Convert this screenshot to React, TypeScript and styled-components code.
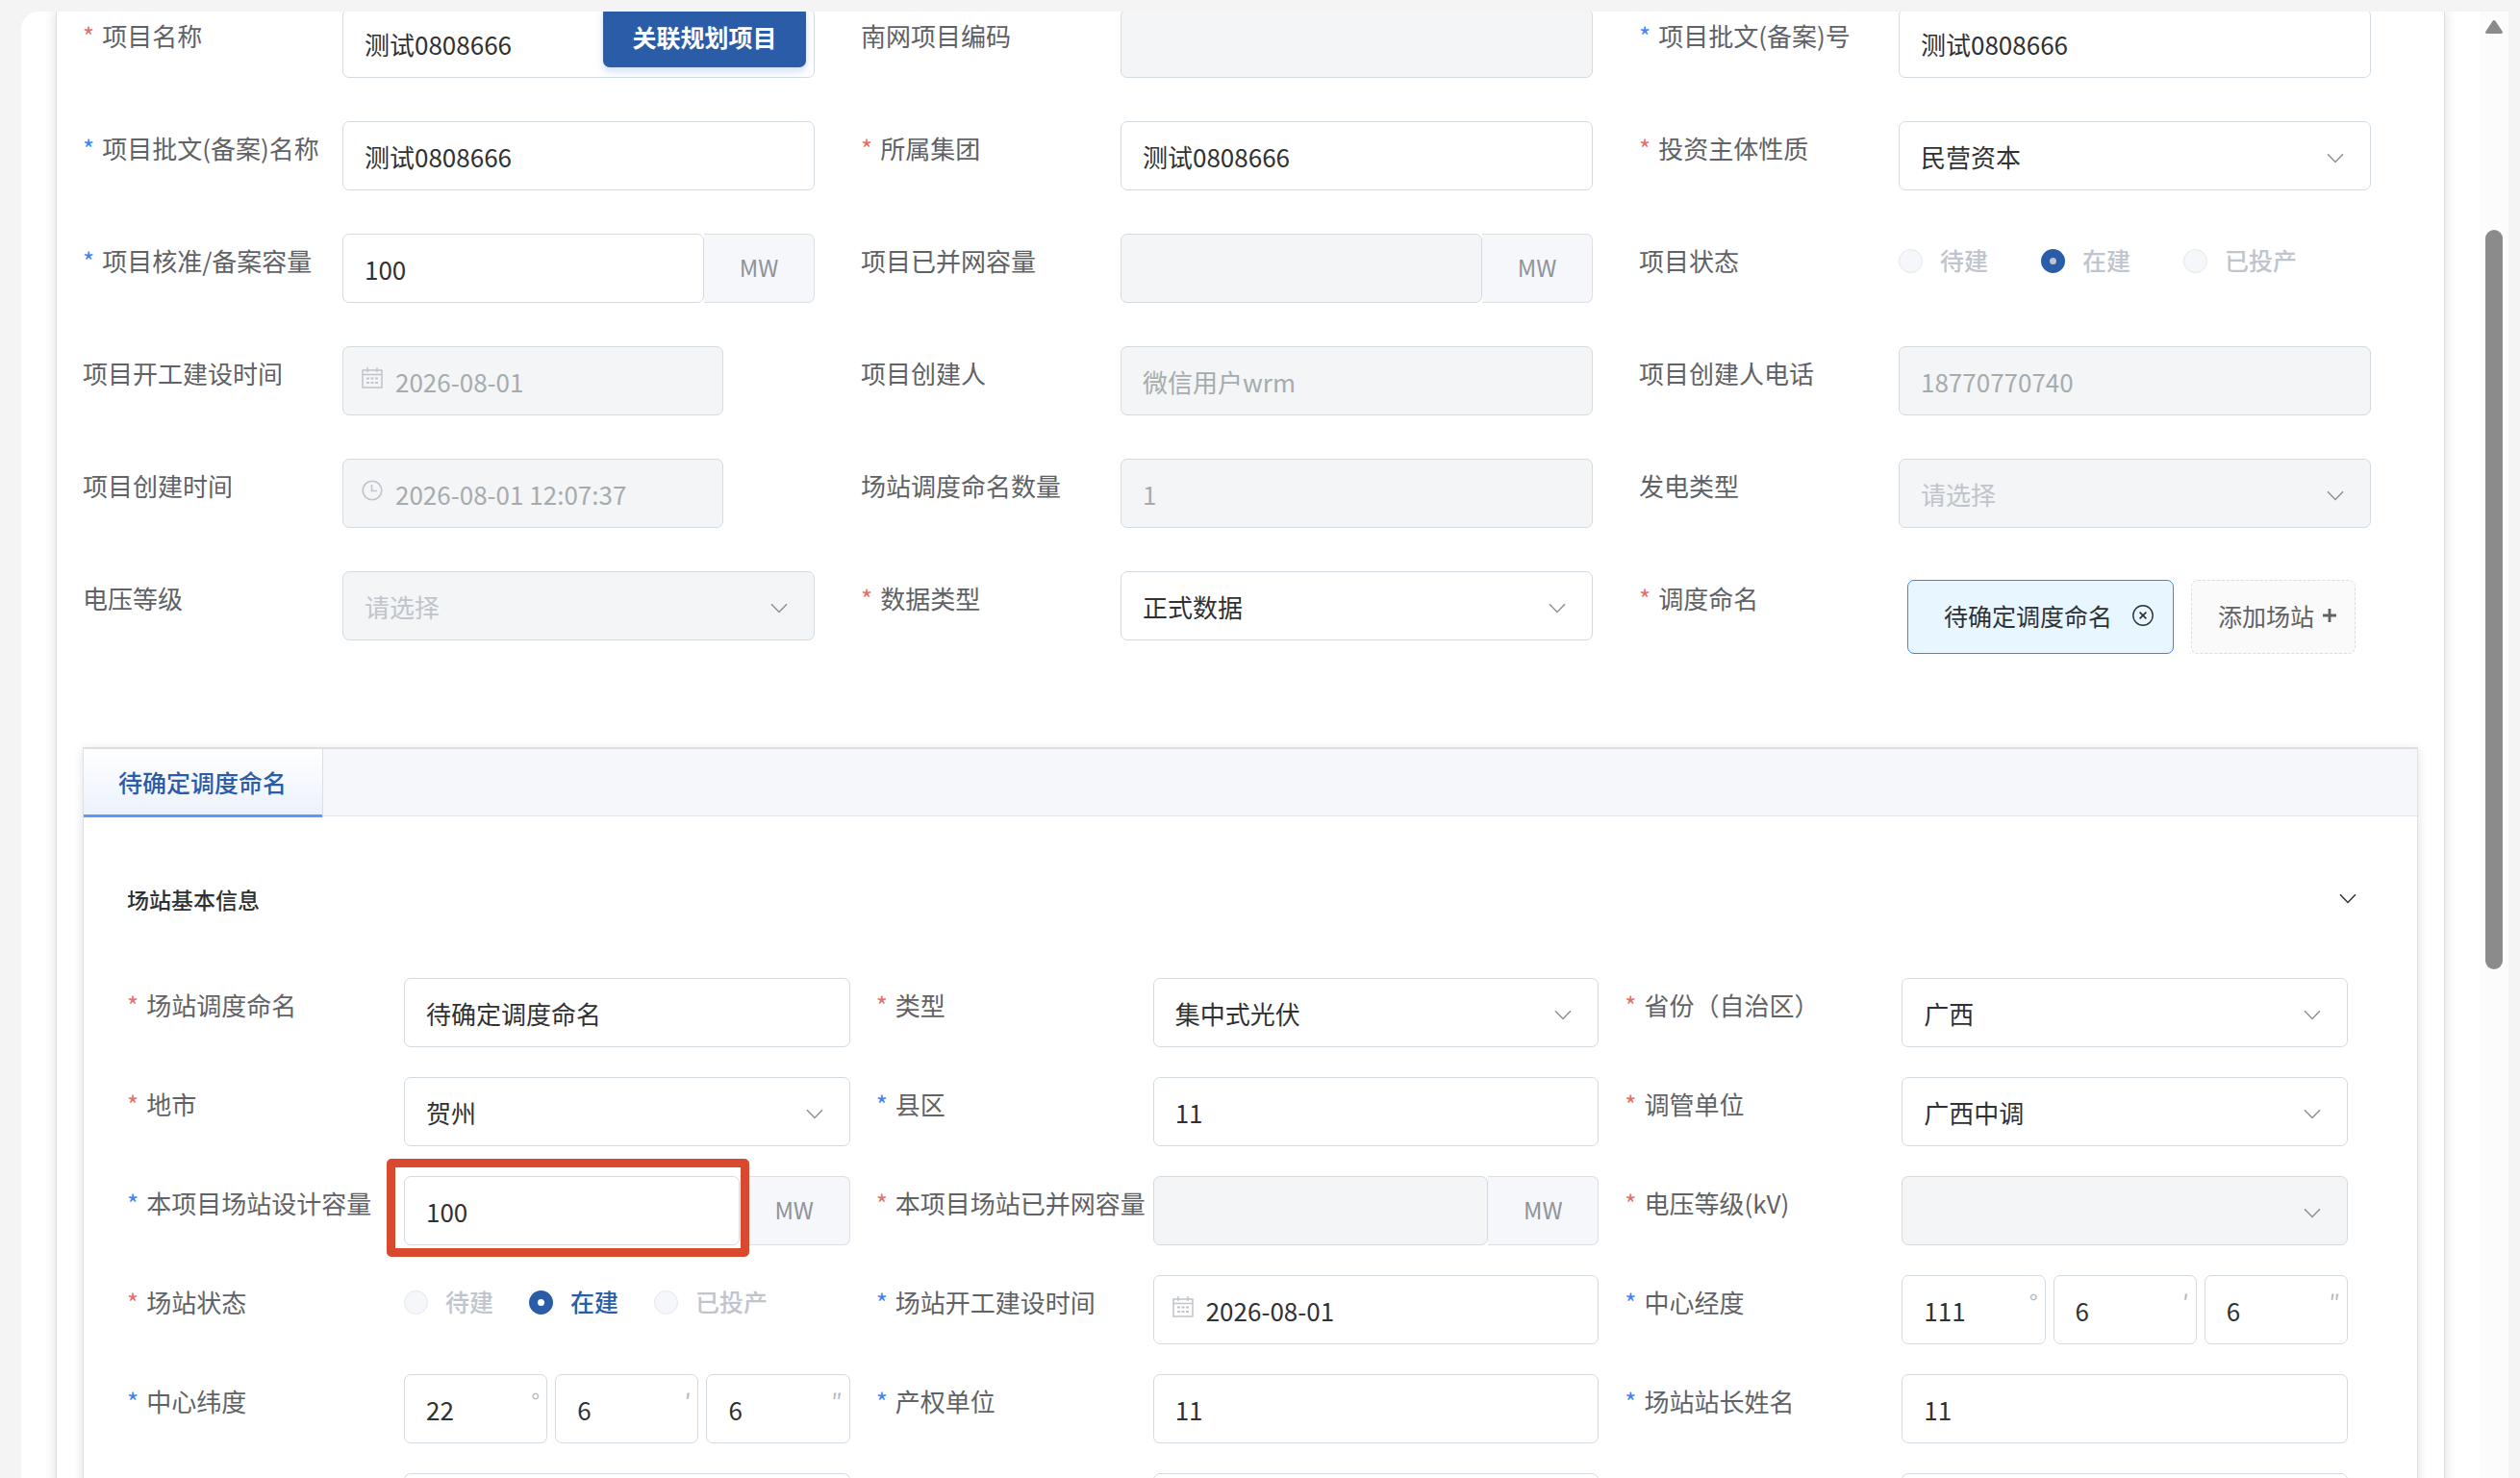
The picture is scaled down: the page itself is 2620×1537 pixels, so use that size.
import React, { useId } from 'react';
import styled, { createGlobalStyle, css } from 'styled-components';

const color = {
  page: '#f4f4f4',
  primary: '#2a5ca8',
  text: '#303133',
  label: '#606266',
  muted: '#909399',
  faint: '#c0c4cc',
  line: '#d3dbe0',
  disabledBg: '#f3f5f7',
  headerBg: '#f5f7fb',
  required: '#e57068',
  advised: '#3f82f7',
};

const GlobalStyle = createGlobalStyle`
  *, *::before, *::after { box-sizing: border-box; }
  body {
    margin: 0;
    overflow: hidden;
    background: ${color.page};
    color: ${color.text};
    font-family: "Noto Sans CJK SC", "Noto Sans", sans-serif;
    font-size: 26px;
  }
  input, select, button { font: inherit; color: inherit; margin: 0; }
`;

const Page = styled.div`
  height: 100vh;
  padding: 12px 12px 0 22px;
  display: flex;
`;

const Sheet = styled.main`
  flex: 1;
  min-width: 0;
  display: flex;
  overflow: hidden;
  background: #fff;
  border-top-left-radius: 18px;
`;

const Viewport = styled.div`
  flex: 1;
  min-width: 0;
  padding: 0 36px;
`;

const Panel = styled.div`
  margin-top: -3px;
  padding: 0 27px;
  border: 1px solid #dcdee2;
  border-top: 0;
  box-shadow: 0 2px 12px rgba(0, 0, 0, 0.14);
`;

const Scrollbar = styled.div`
  flex: 0 0 30px;
  display: flex;
  flex-direction: column;
  align-items: center;
  background: #fcfcfc;
`;

const ScrollButton = styled.button`
  height: 30px;
  padding: 2px 0 0;
  border: 0;
  background: none;
  line-height: 0;
`;

const Thumb = styled.div`
  width: 18px;
  height: 50vh;
  margin-top: 197px;
  border-radius: 9px;
  background: #8b8b8b;
`;

const FormGrid = styled.form`
  display: grid;
  grid-template-columns: repeat(3, minmax(0, 1fr));
`;

const ProjectForm = styled(FormGrid)`
  row-gap: 45px;
  padding-right: 1px;
`;

const StationForm = styled(FormGrid)`
  row-gap: 31px;
`;

const Item = styled.div<{ $dense?: boolean }>`
  display: flex;
  align-items: flex-start;
  min-height: 72px;
  padding-right: ${p => (p.$dense ? 27 : 48)}px;
`;

const Label = styled.label<{ $dense?: boolean }>`
  display: flex;
  flex: 0 0 ${p => (p.$dense ? 288 : 270)}px;
  gap: 8px;
  padding-top: 9px;
  line-height: 38px;
  color: ${color.label};
  white-space: nowrap;
`;

const Mark = styled.span<{ $kind: 'red' | 'blue' }>`
  color: ${p => (p.$kind === 'red' ? color.required : color.advised)};
`;

const Control = styled.div<{ $short?: boolean }>`
  position: relative;
  display: flex;
  flex: 1;
  min-width: 0;
  ${p => p.$short && 'margin-right: 95px;'}
`;

const boxStyle = css`
  width: 100%;
  min-width: 0;
  height: 72px;
  padding: 0 22px;
  border: 1px solid ${color.line};
  border-radius: 7px;
  background: #fff;
  color: ${color.text};
  outline: 0;
  &:disabled {
    background: ${color.disabledBg};
    color: #a6acae;
    opacity: 1;
  }
`;

const TextBox = styled.input<{ $icon?: boolean }>`
  ${boxStyle}
  ${p => p.$icon && 'padding-left: 54px;'}
`;

const SelectBox = styled.select`
  ${boxStyle}
  appearance: none;
  &:disabled { color: ${color.faint}; }
`;

const SelectArrow = styled.span`
  position: absolute;
  right: 28px;
  top: 33px;
  line-height: 0;
  color: #8c9199;
  pointer-events: none;
`;

const FieldIcon = styled.span`
  position: absolute;
  left: 20px;
  top: 22px;
  line-height: 0;
  color: ${color.faint};
`;

const Unit = styled.span`
  flex: 0 0 115px;
  height: 72px;
  padding-bottom: 4px;
  display: flex;
  align-items: center;
  justify-content: center;
  border: 1px solid #dcdfe6;
  border-left: 0;
  border-radius: 0 7px 7px 0;
  background: ${color.headerBg};
  color: ${color.muted};
  font-size: 24px;
`;

const Highlight = styled.span`
  position: absolute;
  inset: -18px 105px -12px -18px;
  border: 9px solid #d9492f;
  border-radius: 5px;
  pointer-events: none;
`;

const LinkButton = styled.button`
  position: absolute;
  top: -2px;
  right: 9px;
  width: 211px;
  height: 63px;
  padding: 0 0 2px;
  border: 0;
  border-radius: 7px;
  background: ${color.primary};
  box-shadow: 0 4px 9px rgba(64, 128, 240, 0.25);
  color: #fff;
  font-size: 25px;
  font-weight: 700;
`;

const RadioRow = styled.div<{ $dense?: boolean }>`
  display: flex;
  gap: ${p => (p.$dense ? 37 : 55)}px;
  padding-top: 8px;
`;

const RadioLabel = styled.label<{ $active?: boolean }>`
  display: flex;
  align-items: center;
  gap: 18px;
  line-height: 38px;
  font-size: 25px;
  font-weight: 500;
  color: ${p => (p.$active ? color.primary : color.faint)};
`;

const Radio = styled.input<{ $live?: boolean }>`
  && { margin-top: 2px; }
  appearance: none;
  width: 25px;
  height: 25px;
  border: 1px solid #e4e7ed;
  border-radius: 50%;
  background: ${color.headerBg};
  &:checked {
    border: 9px solid ${color.primary};
    background: ${p => (p.$live ? '#fff' : color.faint)};
  }
`;

const Triple = styled.div`
  display: flex;
  flex: 1;
  gap: 8px;
`;

const Degree = styled.span`
  position: absolute;
  right: 8px;
  top: 16px;
  font-size: 24px;
  line-height: 24px;
  color: #b4b8c0;
`;

const Tags = styled.div`
  display: flex;
  gap: 18px;
  padding: 9px 0 0 9px;
`;

const Tag = styled.span`
  display: flex;
  align-items: center;
  gap: 21px;
  height: 77px;
  padding: 0 20px 3px 37px;
  border: 1px solid ${color.advised};
  border-radius: 7px;
  background: #e8f7ff;
  font-size: 25px;
  white-space: nowrap;
`;

const IconButton = styled.button`
  padding: 0;
  border: 0;
  background: none;
  line-height: 0;
`;

const AddButton = styled.button`
  display: flex;
  align-items: center;
  gap: 9px;
  height: 77px;
  padding: 0 19px 3px 27px;
  border: 1px dashed #dcdcdc;
  border-radius: 7px;
  background: #fafafa;
  color: ${color.label};
  font-size: 25px;
  white-space: nowrap;
`;

const TabCard = styled.section`
  margin-top: 97px;
  border: 1px solid #dcdfe6;
  border-top: 2px solid #dcdee4;
  box-shadow: 0 2px 10px rgba(0, 0, 0, 0.12);
`;

const TabBar = styled.div`
  display: flex;
  height: 70px;
  border-bottom: 1px solid #e4e7ed;
  background: ${color.headerBg};
`;

const Tab = styled.button`
  height: 71px;
  padding: 0 37px 3px 36px;
  border: 0;
  border-right: 1px solid #dcdfe6;
  background: linear-gradient(#fff, #ebf1fd);
  box-shadow: inset 0 -3px #5b9bf8;
  color: ${color.primary};
  font-size: 25px;
  font-weight: 500;
`;

const TabBody = styled.div`
  padding: 0 45px;
`;

const SectionHead = styled.h2`
  display: flex;
  align-items: center;
  justify-content: space-between;
  height: 168px;
  margin: 0;
  padding: 3px 18px 0 0;
  font-size: 23px;
  font-weight: 500;
`;

const ChevronIcon = () => (
  <svg width="18" height="11" viewBox="0 0 18 11" fill="none" stroke="currentColor" strokeWidth="1.5">
    <path d="M1 1.2 9 9.4 17 1.2" />
  </svg>
);

const CalendarIcon = () => (
  <svg width="22" height="22" viewBox="0 0 22 22" fill="none" stroke="currentColor" strokeWidth="1.5">
    <path d="M1 3h20v18H1zM1 7.5h20M6 0v5M16 0v5" />
    <path d="M5 11.5h3M9.5 11.5h3M14 11.5h3M5 16h3M9.5 16h3M14 16h3" strokeWidth="1.8" />
  </svg>
);

const ClockIcon = () => (
  <svg width="22" height="22" viewBox="0 0 22 22" fill="none" stroke="currentColor" strokeWidth="1.6">
    <circle cx="11" cy="11" r="9.8" />
    <path d="M10.5 5v6.500H16" />
  </svg>
);

const CloseIcon = () => (
  <svg width="22" height="22" viewBox="0 0 22 22" fill="none" stroke="currentColor">
    <circle cx="11" cy="11" r="10.2" strokeWidth="1.4" />
    <path d="m7.600 7.600 6.800 6.800M14.400 7.600l-6.800 6.800" strokeWidth="1.700" />
  </svg>
);

const PlusIcon = () => (
  <svg width="14" height="14" viewBox="0 0 14 14" fill="none" stroke="currentColor" strokeWidth="2.8">
    <path d="M7 0v14M0 7h14" />
  </svg>
);

type Kind = 'text' | 'select' | 'date' | 'time' | 'unit' | 'radio' | 'triple' | 'linked' | 'tags';

interface Field {
  label: string;
  mark?: 'red' | 'blue';
  kind?: Kind;
  value?: string;
  values?: string[];
  disabled?: boolean;
  short?: boolean;
  highlight?: boolean;
}

const projectFields: Field[] = [
  { label: '项目名称', mark: 'red', kind: 'linked', value: '测试0808666' },
  { label: '南网项目编码', disabled: true },
  { label: '项目批文(备案)号', mark: 'blue', value: '测试0808666' },
  { label: '项目批文(备案)名称', mark: 'blue', value: '测试0808666' },
  { label: '所属集团', mark: 'red', value: '测试0808666' },
  { label: '投资主体性质', mark: 'red', kind: 'select', value: '民营资本' },
  { label: '项目核准/备案容量', mark: 'blue', kind: 'unit', value: '100' },
  { label: '项目已并网容量', kind: 'unit', disabled: true },
  { label: '项目状态', kind: 'radio', disabled: true },
  { label: '项目开工建设时间', kind: 'date', value: '2026-08-01', disabled: true, short: true },
  { label: '项目创建人', value: '微信用户wrm', disabled: true },
  { label: '项目创建人电话', value: '18770770740', disabled: true },
  { label: '项目创建时间', kind: 'time', value: '2026-08-01 12:07:37', disabled: true, short: true },
  { label: '场站调度命名数量', value: '1', disabled: true },
  { label: '发电类型', kind: 'select', value: '请选择', disabled: true },
  { label: '电压等级', kind: 'select', value: '请选择', disabled: true },
  { label: '数据类型', mark: 'red', kind: 'select', value: '正式数据' },
  { label: '调度命名', mark: 'red', kind: 'tags' },
];

const stationFields: Field[] = [
  { label: '场站调度命名', mark: 'red', value: '待确定调度命名' },
  { label: '类型', mark: 'red', kind: 'select', value: '集中式光伏' },
  { label: '省份（自治区）', mark: 'red', kind: 'select', value: '广西' },
  { label: '地市', mark: 'red', kind: 'select', value: '贺州' },
  { label: '县区', mark: 'blue', value: '11' },
  { label: '调管单位', mark: 'red', kind: 'select', value: '广西中调' },
  { label: '本项目场站设计容量', mark: 'blue', kind: 'unit', value: '100', highlight: true },
  { label: '本项目场站已并网容量', mark: 'red', kind: 'unit', disabled: true },
  { label: '电压等级(kV)', mark: 'red', kind: 'select', value: '', disabled: true },
  { label: '场站状态', mark: 'red', kind: 'radio' },
  { label: '场站开工建设时间', mark: 'blue', kind: 'date', value: '2026-08-01' },
  { label: '中心经度', mark: 'blue', kind: 'triple', values: ['111', '6', '6'] },
  { label: '中心纬度', mark: 'blue', kind: 'triple', values: ['22', '6', '6'] },
  { label: '产权单位', mark: 'blue', value: '11' },
  { label: '场站站长姓名', mark: 'blue', value: '11' },
  { label: '' },
  { label: '' },
  { label: '' },
];

const degreeMarks = ['°', '′', '″'];

function FieldBody({ field, id, dense }: { field: Field; id: string; dense?: boolean }) {
  const { kind = 'text', value = '', disabled } = field;
  switch (kind) {
    case 'select':
      return (
        <>
          <SelectBox id={id} disabled={disabled} defaultValue={value}>
            <option value={value}>{value}</option>
          </SelectBox>
          <SelectArrow><ChevronIcon /></SelectArrow>
        </>
      );
    case 'date':
    case 'time':
      return (
        <>
          <TextBox id={id} $icon disabled={disabled} defaultValue={value} />
          <FieldIcon>{kind === 'date' ? <CalendarIcon /> : <ClockIcon />}</FieldIcon>
        </>
      );
    case 'unit':
      return (
        <>
          <TextBox id={id} disabled={disabled} defaultValue={value} />
          <Unit>MW</Unit>
          {field.highlight && <Highlight />}
        </>
      );
    case 'radio':
      return (
        <RadioRow $dense={dense}>
          {['待建', '在建', '已投产'].map((text, i) => (
            <RadioLabel key={text} $active={i === 1 && !disabled}>
              <Radio
                type="radio"
                id={i === 0 ? id : undefined}
                name={id}
                $live={!disabled}
                disabled={disabled || i !== 1}
                defaultChecked={i === 1}
              />
              {text}
            </RadioLabel>
          ))}
        </RadioRow>
      );
    case 'triple':
      return (
        <Triple>
          {field.values!.map((v, i) => (
            <Control key={i}>
              <TextBox
                id={i === 0 ? id : undefined}
                aria-label={`${field.label} ${degreeMarks[i]}`}
                defaultValue={v}
              />
              <Degree>{degreeMarks[i]}</Degree>
            </Control>
          ))}
        </Triple>
      );
    case 'linked':
      return (
        <>
          <TextBox id={id} defaultValue={value} />
          <LinkButton type="button">关联规划项目</LinkButton>
        </>
      );
    case 'tags':
      return (
        <Tags>
          <Tag>
            待确定调度命名
            <IconButton type="button" id={id} aria-label="删除"><CloseIcon /></IconButton>
          </Tag>
          <AddButton type="button">添加场站<PlusIcon /></AddButton>
        </Tags>
      );
    default:
      return <TextBox id={id} disabled={disabled} defaultValue={value} />;
  }
}

function FormField({ field, dense }: { field: Field; dense?: boolean }) {
  const id = useId();
  return (
    <Item $dense={dense}>
      <Label htmlFor={id} $dense={dense}>
        {field.mark && <Mark $kind={field.mark}>*</Mark>}
        {field.label}
      </Label>
      <Control $short={field.short}>
        <FieldBody field={field} id={id} dense={dense} />
      </Control>
    </Item>
  );
}

export default function App() {
  return (
    <>
      <GlobalStyle />
      <Page>
        <Sheet>
          <Viewport>
            <Panel>
              <ProjectForm>
                {projectFields.map(f => <FormField key={f.label} field={f} />)}
              </ProjectForm>
              <TabCard>
                <TabBar role="tablist">
                  <Tab type="button" role="tab" aria-selected="true">待确定调度命名</Tab>
                </TabBar>
                <TabBody>
                  <SectionHead>
                    场站基本信息
                    <IconButton type="button" aria-label="收起"><ChevronIcon /></IconButton>
                  </SectionHead>
                  <StationForm>
                    {stationFields.map((f, i) => <FormField key={i} field={f} dense />)}
                  </StationForm>
                </TabBody>
              </TabCard>
            </Panel>
          </Viewport>
          <Scrollbar>
            <ScrollButton type="button" aria-label="向上滚动">
              <svg width="18" height="14" viewBox="0 0 18 14" fill="#8b8b8b">
                <path d="M7.6 .8a1.700 1.700 0 0 1 2.800 0L17.700 11.700Q18.500 14 16 14H2Q-.5 14 .3 11.700z" />
              </svg>
            </ScrollButton>
            <Thumb />
          </Scrollbar>
        </Sheet>
      </Page>
    </>
  );
}
